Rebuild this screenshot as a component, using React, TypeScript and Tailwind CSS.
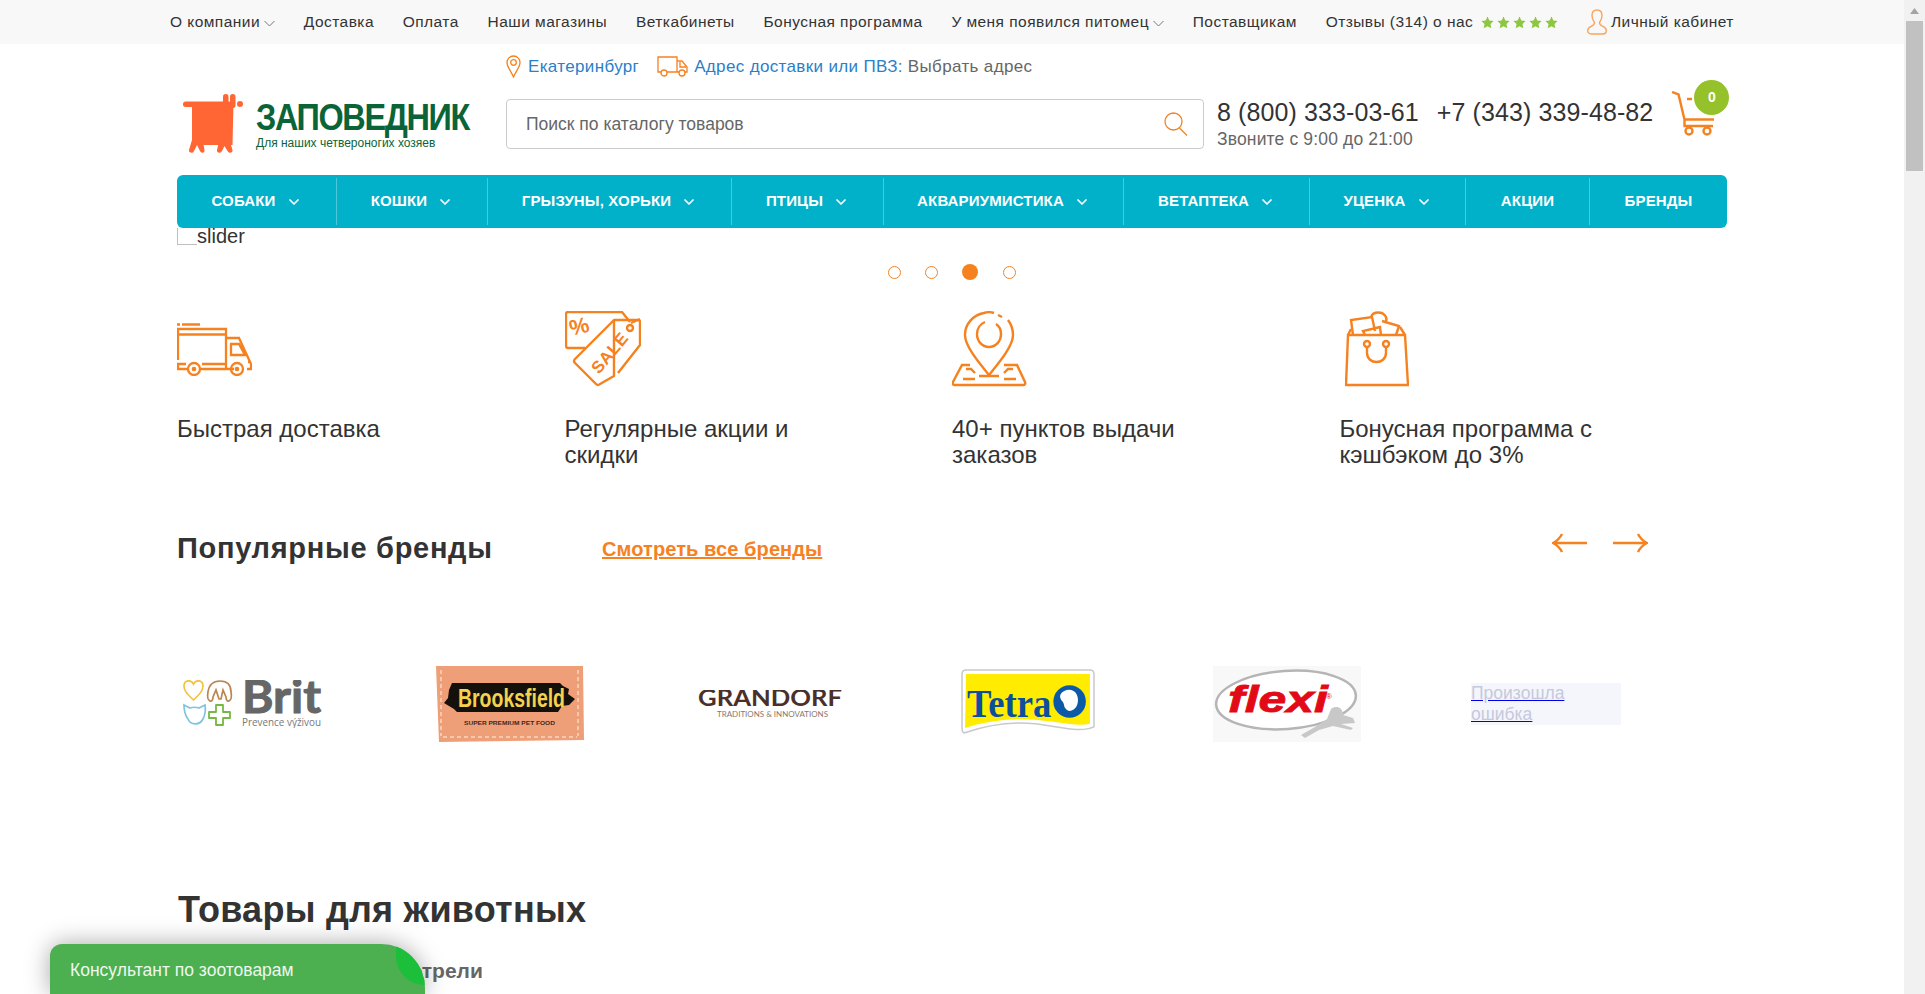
import { ChevronDown } from "lucide-react";

const topLinks = [
  { label: "О компании", arrow: true },
  { label: "Доставка" },
  { label: "Оплата" },
  { label: "Наши магазины" },
  { label: "Веткабинеты" },
  { label: "Бонусная программа" },
  { label: "У меня появился питомец", arrow: true },
  { label: "Поставщикам" },
];

const navItems = [
  { label: "Собаки", width: "w-[160px]", arrow: true },
  { label: "Кошки", width: "w-[151px]", arrow: true },
  { label: "Грызуны, хорьки", width: "w-[244px]", arrow: true },
  { label: "Птицы", width: "w-[152px]", arrow: true },
  { label: "Аквариумистика", width: "w-[240px]", arrow: true },
  { label: "Ветаптека", width: "w-[186px]", arrow: true },
  { label: "Уценка", width: "w-[156px]", arrow: true },
  { label: "Акции", width: "w-[124px]" },
  { label: "Бренды", width: "w-[137px]" },
];

const orange = "#f5811f";

function Star() {
  return (
    <svg width="13" height="13" viewBox="0 0 24 24" fill="#8dc63f">
      <path d="M12 1l3.4 7.3 7.9 1-5.8 5.5 1.5 7.9-7-3.9-7 3.9 1.5-7.9L.7 9.300l7.900-1z" />
    </svg>
  );
}

function SmallChevron() {
  return (
    <svg width="11" height="7" viewBox="0 0 11 7" fill="none" stroke="#777" strokeWidth="1" className="ml-[4px] mt-[3px]">
      <path d="M.5 1l5 5 5-5" />
    </svg>
  );
}

function UserIcon() {
  return (
    <svg width="20" height="26" viewBox="0 0 20 26" fill="none" stroke="#f8a55e" strokeWidth="1.4">
      <path d="M10 1c3.200 0 5 2.300 5 5.500 0 2.800-1.200 5.300-2.500 7 0 1.700.6 2.500 3 3.700 2.500 1.200 3.800 2.300 3.800 4.300 0 2.200-1.500 3.500-3.500 3.500H4.200C2.200 25 .7 23.700.7 21.500c0-2 1.300-3.100 3.800-4.300 2.400-1.200 3-2 3-3.700C6.200 11.800 5 9.300 5 6.500 5 3.300 6.800 1 10 1z" />
    </svg>
  );
}

function Logo() {
  return (
    <svg width="60" height="60" viewBox="0 0 60 60" fill="#ff6633">
      <rect x="0" y="7.500" width="50" height="5.500" rx="2.700" />
      <rect x="40" y="0" width="5.500" height="14" rx="2.700" />
      <rect x="47" y="0" width="5.500" height="14" rx="2.700" />
      <circle cx="57" cy="10" r="3" />
      <path d="M9 8h41.500l-1 43H9z" />
      <path d="M9 46l-3 10c-.5 3 4 4 5 1l3-6 3 6c1.500 3 5 2 4.500-1L20 48zM36 48l-2 8c-.5 3 3.500 4 5 1l2.500-5 3 5c1.500 3 5.500 2 5-1l-3-10z" />
    </svg>
  );
}

function PinSmall() {
  return (
    <svg width="15" height="23" viewBox="0 0 15 23" fill="none" stroke={orange} strokeWidth="1.300">
      <path d="M7.500 22C5 16 1 12 1 7.500a6.500 6.500 0 0 1 13 0C14 12 10 16 7.500 22z" />
      <circle cx="7.500" cy="7.500" r="2.800" />
    </svg>
  );
}

function TruckSmall() {
  return (
    <svg width="31" height="21" viewBox="0 0 31 21" fill="none" stroke={orange} strokeWidth="1.300">
      <path d="M4 16H1V1h19v15H10M20 5h5l5 6v5h-2M20 16h2" />
      <path d="M23 6v5h6" />
      <circle cx="7" cy="17" r="3" />
      <circle cx="25" cy="17" r="3" />
    </svg>
  );
}

function SearchIcon() {
  return (
    <svg width="24" height="24" viewBox="0 0 24 24" fill="none" stroke={orange} strokeWidth="1.300">
      <circle cx="9.500" cy="9.500" r="8.500" />
      <path d="M15.500 16l7.500 7.500" />
    </svg>
  );
}

function Cart() {
  return (
    <div className="relative ml-[19px] mt-[-22px] h-[45px] w-[44px]">
      <svg width="44" height="45" viewBox="0 0 44 45" fill="none" stroke={orange} strokeWidth="2.400">
        <path d="M0 1l6.500 2.500L12.500 28.500H42M12.500 28.500V35H41M15 8h5" />
        <circle cx="17" cy="40" r="3.500" />
        <circle cx="35" cy="40" r="3.500" />
      </svg>
      <div className="absolute left-[22px] top-[-11px] flex h-[35px] w-[35px] items-center justify-center rounded-full bg-[#95c12b] text-[14px] font-bold text-white">
        0
      </div>
    </div>
  );
}

function TruckIcon() {
  return (
    <svg width="75" height="54" viewBox="0 0 75 54" fill="none" stroke={orange} strokeWidth="2.300">
      <path d="M0 2.500h3M5 2.500h18M1 38V7h48v40M1 12.500h48M1 42v5h10M23 47h26M0 42h9M25 42h24" />
      <path d="M49 16h13l12 26v5h-4M49 47h8M54 22h8l6 11H54zM74 40h-3" />
      <circle cx="17" cy="47" r="6" />
      <circle cx="17" cy="47" r="1.200" />
      <circle cx="60" cy="47" r="6" />
      <circle cx="60" cy="47" r="1.200" />
    </svg>
  );
}

function SaleIcon() {
  return (
    <svg width="76" height="76" viewBox="0 0 76 76" fill="none" stroke={orange} strokeWidth="2.400" strokeLinejoin="round">
      <path d="M20 37H3Q1 37 1 35V3Q1 1 3 1H57L65 11" />
      <path d="M49 9H73Q75 9 75 11V34L53 62M49 65L35 73Q33 75 31 73L10 52Q8 50 10 48L49 9z" />
      <path d="M66 12l9-4" />
      <circle cx="65" cy="17" r="3" />
      <text x="5" y="23" fontSize="22" fontWeight="bold" fill={orange} stroke="none" fontFamily="Liberation Sans, sans-serif" transform="rotate(-14 14 18)">
        %
      </text>
      <text x="46" y="49" fontSize="17" fontWeight="bold" letterSpacing="0.5" textAnchor="middle" fill={orange} stroke="none" fontFamily="Liberation Sans, sans-serif" transform="rotate(-50 44 44)">
        SALE
      </text>
    </svg>
  );
}

function PinIcon() {
  return (
    <svg width="75" height="76" viewBox="0 0 75 76" fill="none" stroke={orange} strokeWidth="2.400">
      <path d="M42 2C39 1 35 1 32 2 21 4 13 13 13 24c0 12 16 30 24 40 8-10 24-28 24-40 0-6-2-11-5-15" />
      <path d="M46 4l4 2" />
      <path d="M33 11C28 13 25 18 25 23c0 7 5 13 12 13s12-6 12-13c0-4-2-8-5-10" />
      <path d="M18 54H10L1 71q-1 3 2 3h68q3 0 2-3L65 54H52" />
      <path d="M14 58h5l4 4M61 58h-5l-4 4M11 68h12M52 68h12M27 65h20" />
    </svg>
  );
}

function BagIcon() {
  return (
    <svg width="64" height="76" viewBox="0 0 64 76" fill="none" stroke={orange} strokeWidth="2.400">
      <path d="M3 24L1 74h62L60 24zM3 24l3-6M60 24l-5-8" />
      <path d="M8 24L6 9l21-3 3 14M20 24l-2-4 17-4 1 8" />
      <path d="M26 6c2-6 12-6 15 0 1 3 0 5-1 6M37 10l17 5-3 9" />
      <circle cx="22" cy="33" r="3" />
      <circle cx="41" cy="33" r="3" />
      <path d="M22 36v6c0 12 19 12 19 0v-6" />
    </svg>
  );
}

function ArrowIcon({ flip }: { flip?: boolean }) {
  return (
    <svg width="36" height="20" viewBox="0 0 36 20" fill="none" stroke={orange} strokeWidth="2.400" className={flip ? "rotate-180" : ""}>
      <path d="M1 10h34M10 1C8 5 5 8 1 10c4 2 7 5 9 9" />
    </svg>
  );
}

function BritLogo() {
  return (
    <svg width="140" height="48" viewBox="0 0 140 48" fill="none" className="shrink-0">
      <path d="M10.500 20C3 13 1 10 1 6c0-6 7-7 9.500-2 2.500-5 9.500-4 9.500 2 0 4-2 7-9.500 14z" stroke="#f3c33f" strokeWidth="1.700" />
      <path d="M27 21c-2-1-3-4-2-9 1-7 5-11 12-11 7 0 11 4 11 11 1 5 0 8-2 9-2 1-3-2-3-4l-3-7-2 9h-2l-3-9-3 7c0 2-1 5-3 4z" stroke="#b98650" strokeWidth="1.700" />
      <path d="M1 25l6 3c3-1 6-1 9 0l6-3c1 6 0 10-2 14-3 6-12 7-15 0-3-4-4-8-4-14z" stroke="#7fc4de" strokeWidth="1.700" />
      <path d="M33 25h7v7h7v6h-7v7h-7v-7h-7v-6h7z" stroke="#76b843" strokeWidth="1.800" strokeLinejoin="round" />
      <text x="59" y="33" fontSize="46" fontWeight="bold" fill="#666" stroke="#666" strokeWidth="1" fontFamily="Lato, sans-serif" textLength="79" lengthAdjust="spacingAndGlyphs">
        Brit
      </text>
      <text x="59" y="46" fontSize="11" fill="#777" fontFamily="Open Sans, sans-serif" textLength="79" lengthAdjust="spacingAndGlyphs">
        Prevence výživou
      </text>
    </svg>
  );
}

function BrooksfieldLogo() {
  return (
    <svg width="150" height="78" viewBox="0 0 150 78" className="shrink-0">
      <path d="M1 1h147l1 74-145 2z" fill="#ee9f77" />
      <path d="M6 5v66M143 5v66M8 72h134" stroke="#f7d8c4" strokeWidth="1.500" strokeDasharray="4 3" fill="none" />
      <path d="M17 18h108l3 3 6 3-1 5 7 5-6 6-7 1-4 6H22l-3-3-10-6 4-5 1-8z" fill="#14110c" />
      <text x="23" y="42" fontSize="25" fontWeight="bold" fill="#f4d14f" fontFamily="Liberation Sans, sans-serif" textLength="107" lengthAdjust="spacingAndGlyphs">
        Brooksfield
      </text>
      <text x="29" y="60" fontSize="6" fontWeight="bold" fill="#3b2a20" fontFamily="Liberation Sans, sans-serif" textLength="91" lengthAdjust="spacingAndGlyphs">
        SUPER PREMIUM PET FOOD
      </text>
    </svg>
  );
}

function GrandorfLogo() {
  return (
    <svg width="144" height="28" viewBox="0 0 144 28" className="shrink-0">
      <text x="0" y="16" fontSize="22" fontWeight="bold" fill="#4a3029" fontFamily="Lato, sans-serif" textLength="144" lengthAdjust="spacingAndGlyphs">
        GRANDORF
      </text>
      <text x="19" y="27" fontSize="7" fill="#8a7770" fontFamily="Lato, sans-serif" textLength="111" lengthAdjust="spacingAndGlyphs">
        TRADITIONS &amp; INNOVATIONS
      </text>
    </svg>
  );
}

function TetraLogo() {
  return (
    <svg width="136" height="67" viewBox="0 0 134 66" className="shrink-0">
      <path d="M6 2h122q4 0 4 4v52c-14 6-32 0-58-3-26-3-50 2-70 9-2-1-2-2-2-4V6q0-4 4-4z" fill="#fff" stroke="#c9c9c9" strokeWidth="1.500" strokeLinejoin="round" />
      <path d="M6 6h122v49c-12 3-30-2-54-4-26-2-50 2-69 8z" fill="#ffec00" />
      <text x="7" y="48" fontSize="40" fontWeight="bold" fill="#0c4f9e" fontFamily="Liberation Serif, serif" textLength="83" lengthAdjust="spacingAndGlyphs">
        Tetra
      </text>
      <circle cx="108" cy="33" r="16" fill="#0c5aa6" />
      <path d="M99 26c4-6 13-6 16 0 2 4 2 11-3 15-3 2-6 2-8-1-2-2-1-5-3-7-2-2-3-5-2-7z" fill="#fff" />
    </svg>
  );
}

function FlexiLogo() {
  return (
    <svg width="148" height="76" viewBox="0 0 148 76" className="shrink-0">
      <rect width="148" height="76" fill="#f8f8f8" />
      <ellipse cx="73" cy="34" rx="70" ry="29" fill="#fff" stroke="#b5b5b5" strokeWidth="2.500" transform="rotate(-4 73 34)" />
      <text x="15" y="46" fontSize="36" fontWeight="bold" fontStyle="italic" fill="#e30a17" stroke="#e30a17" strokeWidth=".8" fontFamily="Liberation Sans, sans-serif" textLength="100" lengthAdjust="spacingAndGlyphs">
        flexi
      </text>
      <text x="113" y="33" fontSize="8" fill="#e30a17" fontFamily="Liberation Sans, sans-serif">
        ®
      </text>
      <path d="M88 69l14-8 12-8 4-10c5-4 12-2 12 6l10 3 2 5-14 1 12 4-2 2-18-4-14 4-14 8z" fill="#c8c8c8" />
    </svg>
  );
}

export default function App() {
  return (
    <div className="flex h-[994px] w-[1925px] overflow-hidden bg-white font-['Liberation_Sans',Arial,sans-serif] text-[#333]">
      <div className="relative w-[1904px]">
        {/* Top bar */}
        <div className="h-[44px] bg-[#f8f8f8]">
          <div className="mx-auto flex h-full w-[1564px] items-center justify-between text-[15.500px] tracking-[0.45px]">
            {topLinks.map((link) => (
              <a key={link.label} className="flex items-center">
                {link.label}
                {link.arrow && <SmallChevron />}
              </a>
            ))}
            <div className="flex items-center gap-[8px]">
              <span>Отзывы (314) о нас</span>
              <span className="flex gap-[3px]">
                <Star />
                <Star />
                <Star />
                <Star />
                <Star />
              </span>
            </div>
            <a className="flex items-center gap-[4px]">
              <UserIcon />
              Личный кабинет
            </a>
          </div>
        </div>

        <div className="mx-auto w-[1550px]">
          {/* City and delivery address */}
          <div className="flex h-[45px] items-center pl-[329px] text-[17px] tracking-[0.35px]">
            <PinSmall />
            <a className="ml-[7px] text-[#2a7fc9]">Екатеринбург</a>
            <span className="ml-[18px]">
              <TruckSmall />
            </span>
            <a className="ml-[6px] text-[#2a7fc9]">Адрес доставки или ПВЗ:</a>
            <a className="ml-[5px] text-[#666]">Выбрать адрес</a>
          </div>

          {/* Logo, search, phones */}
          <div className="mt-[5px] flex items-center">
            <div className="flex w-[329px] items-center pl-[6px]">
              <Logo />
              <div className="ml-[13px]">
                <div className="origin-left scale-x-[0.9] text-[36px] leading-[38px] font-bold tracking-[-1.500px] text-[#0a6437]">ЗАПОВЕДНИК</div>
                <div className="text-[12px] leading-[12px] text-[#0a6437]">Для наших четвероногих хозяев</div>
              </div>
            </div>
            <div className="flex h-[50px] w-[698px] items-center justify-between rounded-[4px] border border-[#ccc] pl-[19px] pr-[15px]">
              <span className="text-[17.500px] text-[#666]">Поиск по каталогу товаров</span>
              <SearchIcon />
            </div>
            <div className="ml-[13px] whitespace-nowrap">
              <div className="flex gap-[18px] text-[25px] leading-[28px] tracking-[0.1px]">
                <span>8 (800) 333-03-61</span>
                <span>+7 (343) 339-48-82</span>
              </div>
              <div className="mt-[2px] text-[17.500px] leading-[22px] tracking-[0.15px] text-[#666]">Звоните с 9:00 до 21:00</div>
            </div>
            <Cart />
          </div>

          {/* Main menu */}
          <nav className="mt-[21px] flex h-[53px] items-center rounded-[6px] bg-[#00b1c9] text-[15px] font-bold uppercase tracking-[0.15px] text-white">
            {navItems.map((item, i) => (
              <a
                key={item.label}
                className={`flex h-[47px] items-center justify-center gap-[10px] ${item.width} ${i < navItems.length - 1 ? "border-r border-[#4cc8d9]" : ""}`}
              >
                {item.label}
                {item.arrow && <ChevronDown size={16} strokeWidth={2.600} />}
              </a>
            ))}
          </nav>

          {/* Broken slider image */}
          <div className="flex h-[17px] items-center">
            <span className="h-[17px] w-[20px] border-b border-l border-[#c0c0c0]" />
            <span className="text-[20px] leading-[17px]">slider</span>
          </div>

          {/* Slider dots */}
          <div className="mt-[18px] flex h-[18px] items-center pl-[711px]">
            <span className="h-[13px] w-[13px] rounded-full border border-[#f5811f]" />
            <span className="ml-[24px] h-[13px] w-[13px] rounded-full border border-[#f5811f]" />
            <span className="ml-[24px] h-[16px] w-[16px] rounded-full bg-[#f5811f]" />
            <span className="ml-[25px] h-[13px] w-[13px] rounded-full border border-[#f5811f]" />
          </div>

          {/* Advantages */}
          <div className="mt-[30px] grid grid-cols-4 text-[24px] leading-[26px]">
            <div className="w-[270px]">
              <div className="flex h-[76px] items-center">
                <TruckIcon />
              </div>
              <p className="mt-[29px]">Быстрая доставка</p>
            </div>
            <div className="w-[270px]">
              <div className="h-[76px]">
                <SaleIcon />
              </div>
              <p className="mt-[29px]">Регулярные акции и скидки</p>
            </div>
            <div className="w-[270px]">
              <div className="h-[76px]">
                <PinIcon />
              </div>
              <p className="mt-[29px]">40+ пунктов выдачи заказов</p>
            </div>
            <div className="w-[270px]">
              <div className="h-[76px] pl-[5px]">
                <BagIcon />
              </div>
              <p className="mt-[29px]">Бонусная программа с кэшбэком до 3%</p>
            </div>
          </div>

          {/* Popular brands */}
          <div className="mt-[63px] flex h-[36px] items-center">
            <h2 className="w-[425px] text-[29px] font-bold tracking-[0.7px]">Популярные бренды</h2>
            <a className="text-[20px] font-bold tracking-[0.1px] text-[#f5811f] underline">Смотреть все бренды</a>
            <div className="ml-[730px] flex gap-[24px] pb-[12px]">
              <ArrowIcon />
              <ArrowIcon flip />
            </div>
          </div>

          <div className="mt-[98px] flex h-[78px] items-center">
            <div className="ml-[6px]">
              <BritLogo />
            </div>
            <div className="ml-[112px]">
              <BrooksfieldLogo />
            </div>
            <div className="ml-[113px]">
              <GrandorfLogo />
            </div>
            <div className="mb-[6px] ml-[118px]">
              <TetraLogo />
            </div>
            <div className="ml-[117px]">
              <FlexiLogo />
            </div>
            <a className="ml-[110px] h-[42px] w-[150px] bg-[#f4f6fb] text-[17.500px] leading-[21px] text-[#c5c9de] underline decoration-[#0000ee]">
              Произошла ошибка
            </a>
          </div>

          {/* Products */}
          <h2 className="mt-[145px] pl-[1px] text-[36px] leading-[44px] font-bold tracking-[0.25px]">Товары для животных</h2>
          <div className="mt-[23px] pl-[73px] text-[21px] font-bold text-[#666]">Вы недавно смотрели</div>
        </div>

        {/* Chat widget */}
        <div className="absolute bottom-0 left-[50px] h-[50px] w-[375px] overflow-hidden rounded-tl-[12px] rounded-tr-[44px] bg-[#4caf50] pl-[20px] pt-[16px] text-[17.500px] leading-[20px] text-[#eef7ee] shadow-[0_0_24px_rgba(0,0,0,0.35)]">
          Консультант по зоотоварам
          <span className="absolute right-0 top-0 h-[41px] w-[29px] rounded-bl-[34px] bg-[#1bbf3a]" />
        </div>
      </div>

      {/* Scrollbar */}
      <div className="flex w-[21px] flex-col items-center bg-[#f1f1f1] pt-[8px]">
        <svg width="9" height="6" viewBox="0 0 9 6" fill="#a3a3a3">
          <path d="M4.500 0L9 6H0z" />
        </svg>
        <div className="mt-[7px] h-[150px] w-[17px] bg-[#c1c1c1]" />
      </div>
    </div>
  );
}
